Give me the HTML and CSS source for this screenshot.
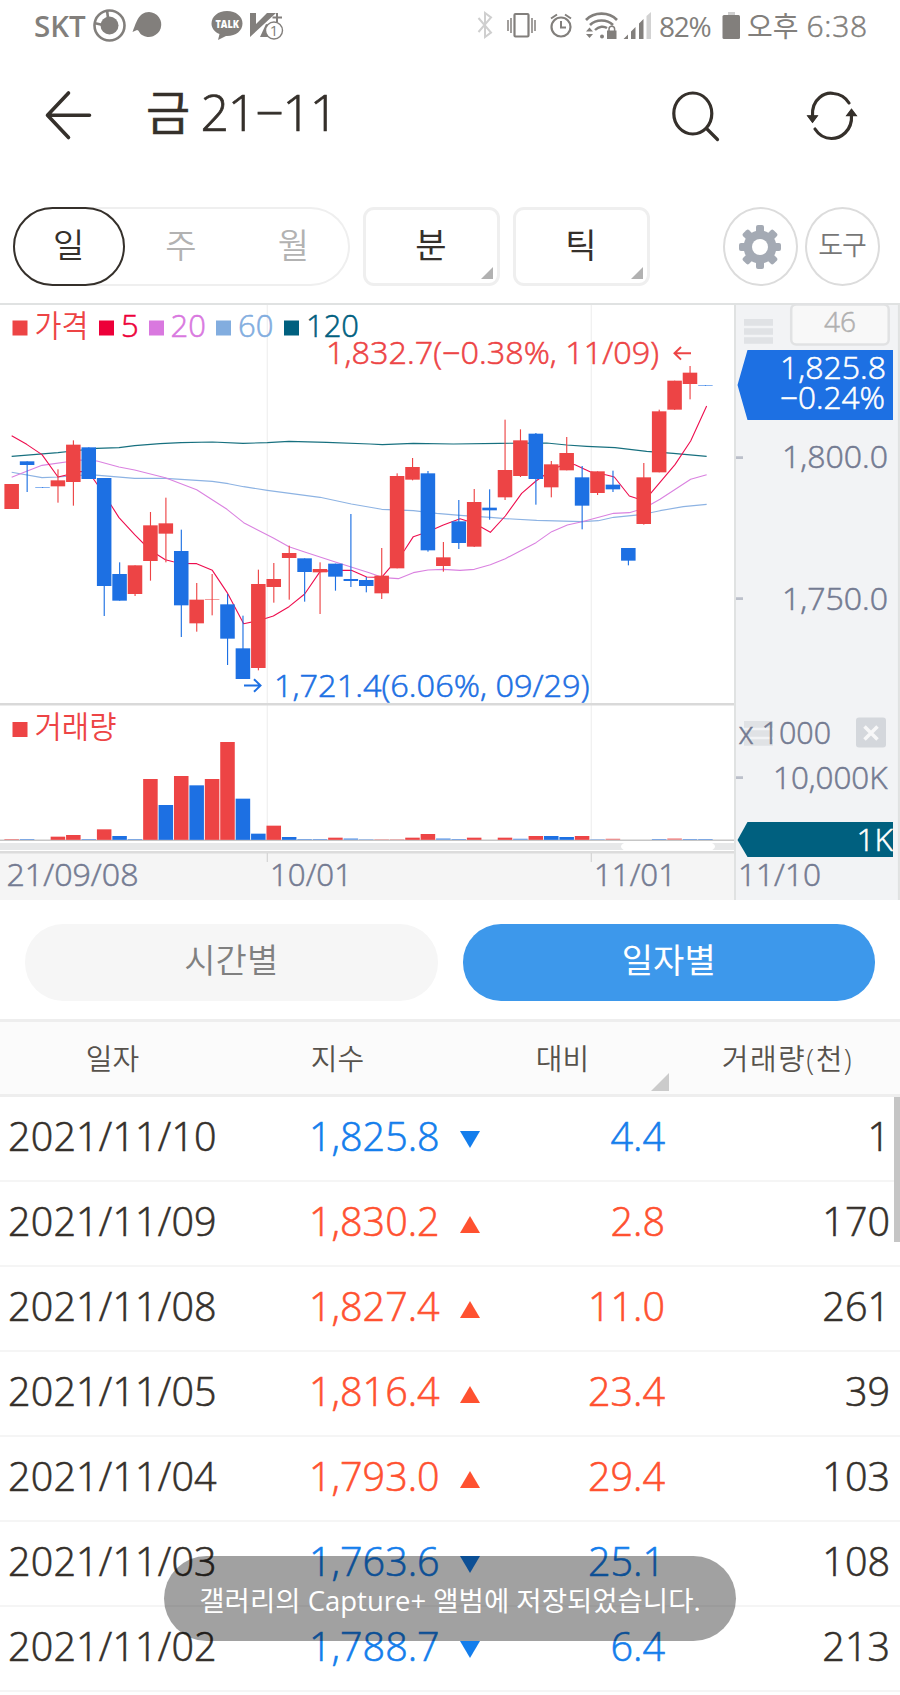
FILE: index.html
```html
<!DOCTYPE html>
<html lang="ko">
<head>
<meta charset="utf-8">
<title>금 21-11</title>
<link rel="stylesheet" href="styles.css">
</head>
<body>
<div class="screen">
  <header class="status">
    <span class="carrier">SKT</span>
    <svg class="status-left" width="200" height="50" viewBox="90 0 200 50">
      <g fill="none" stroke="#827f7c" stroke-width="2.6"><circle cx="109.500" cy="25.500" r="15"/><path d="M94 23l9 2M107 10l1 8"/></g>
      <circle cx="109.500" cy="25.500" r="9" fill="#827f7c"/>
      <path d="M132.500 32C136 24 138 12 149 12a12.500 12.500 0 1 1-7 23c-3-2-3-5-5-5z" fill="#827f7c"/>
      <path d="M227 11c9 0 15.500 5.500 15.500 12.500S236 36 227 36h-1l-8 4 1.500-6c-5-2-8-6-8-10.500C211.500 16.500 218 11 227 11z" fill="#827f7c"/>
      <text class="talk" x="215.500" y="27.500" textLength="23.500" lengthAdjust="spacingAndGlyphs">TALK</text>
      <path d="M250 13h6v11l11-11h9L250 37z" fill="#827f7c"/>
      <path d="M277 13v9M272.500 17.500h9.500" stroke="#827f7c" stroke-width="2"/>
      <path d="M260 37l6-13 6 2v11z" fill="#827f7c"/>
      <circle cx="274" cy="30.500" r="8.500" fill="#fff" stroke="#827f7c" stroke-width="1.400"/>
      <text class="badge-count" x="274" y="36" text-anchor="middle">1</text>
    </svg>
    <svg class="status-right" width="180" height="50" viewBox="475 0 180 50" fill="none" stroke="#827f7c">
      <path d="M478.500 18l12.500 14.500-6 4.500V13l6 4.500L478.500 32" stroke="#cfcfcf" stroke-width="2"/>
      <rect x="514.500" y="14" width="14" height="22.500" rx="1" stroke-width="2.200"/>
      <path d="M508 20v11M511 18v15M532 18v15M535 20v11" stroke-width="1.500"/>
      <circle cx="561" cy="27" r="9.500" stroke-width="2.200"/><path d="M561 21v6.500h5M551 18.500l6-4M571 18.500l-6-4" stroke-width="2"/>
      <path d="M586 20c8-8.500 23-8.500 31 0M590 25c6-6 17-6 23 0" stroke-width="2.600"/><path d="M595 30c4-4 9-4 12-2" stroke-width="2.400"/>
      <g fill="#827f7c" stroke="none"><circle cx="602" cy="36.500" r="2"/><path d="M586 31.500l3.500-4 3.500 4zM586 34h7l-3.500 4zM607 30.500h9.500V39H607z"/></g>
      <path d="M609 31v-2a2.800 2.800 0 0 1 5.600 0v2" stroke-width="1.500"/>
      <g fill="#827f7c" stroke="none"><path d="M623.500 39l4.500-4.500V39zM631 31.500l4.500-4.500v12H631zM639 23.500l4.500-4.500v20H639z"/><path d="M646.500 16l4.500-4v27h-4.500z" fill="#d2d2d2"/></g>
    </svg>
    <span class="battery-text">82%</span>
    <svg class="battery" width="18" height="50" viewBox="722 0 18 50"><path d="M728 12h7v3h-7z" fill="#cfcfcf"/><rect x="722.500" y="15" width="17.500" height="24" rx="1.500" fill="#827f7c"/></svg>
    <span class="clock"><span class="ampm">오후</span><span class="time">6:38</span></span>
  </header>

  <div class="titlebar">
    <svg width="60" height="60" viewBox="40 85 60 60" fill="none" stroke="#35302b" stroke-width="3.600" stroke-linecap="round" stroke-linejoin="round"><path d="M68.500 93L47.500 115.300l21 22.200M48 115.300h41.500"/></svg>
    <h1><span class="name">금</span>21−11</h1>
    <svg class="search" width="60" height="60" viewBox="665 85 60 60" fill="none" stroke="#35302b" stroke-width="3.200" stroke-linecap="round"><ellipse cx="692.800" cy="113.500" rx="19" ry="20.500"/><path d="M706.500 128.500l11 11"/></svg>
    <svg class="refresh" width="60" height="60" viewBox="800 85 60 60" fill="none" stroke="#35302b" stroke-width="3.200" stroke-linecap="round"><path d="M812.500 116c-1-18 13-24 21-22.500 7 .500 12 4 15.500 9.500M851.500 115c1 16-11 23.500-20 23.500-7 0-13-4-16.500-9.500"/><path d="M807 115.500h11l-5.500 7.500zM846 116h11l-5.500-7z" fill="#35302b" stroke="none"/><path d="M808 116h9l-4.500 6zM847 115.500h9l-4.500-6z" stroke-width="1.500" fill="#35302b"/></svg>
  </div>

  <nav class="toolbar">
    <div class="periods"><span class="period active">일</span><span class="period">주</span><span class="period">월</span></div>
    <div class="select">분</div>
    <div class="select">틱</div>
    <div class="round gear">
      <svg width="44" height="46" viewBox="-22 -23 44 46"><g fill="#a4aab4"><circle r="16.500"/><rect x="-4" y="-22" width="8" height="44" rx="2"/><rect x="-21" y="-4" width="42" height="8" rx="2"/><g transform="rotate(45)"><rect x="-4.200" y="-21.500" width="8.400" height="43" rx="2"/><rect x="-21.500" y="-4.200" width="43" height="8.400" rx="2"/></g></g><circle r="8" fill="#fff"/></svg>
    </div>
    <div class="round">도구</div>
  </nav>

  <svg class="chart" width="900" height="597" viewBox="0 303 900 597">
    <rect x="0" y="853" width="735" height="47" fill="#f5f5f5"/>
    <rect x="735" y="303" width="165" height="597" fill="#f2f3f5"/>
    <path d="M0 304h900M898.900 303v597M735 305v595" stroke="#e0e2e2" stroke-width="2"/>
    <path d="M267.300 305v534M591.300 305v534" stroke="#f1f1f1" stroke-width="1.300"/>
    <path d="M0 704.200h734" stroke="#d9d9d9" stroke-width="2.600"/>
    <path d="M0 840.300h734" stroke="#c6c6c6" stroke-width="1.500"/>
    <rect x="0" y="843" width="734" height="7" fill="#e7e8e9"/>
    <rect x="621" y="842.500" width="94" height="8" rx="6" fill="#fff"/>
    <path d="M0 852.300h734" stroke="#dcdcdc" stroke-width="2.400"/>
    <path d="M267.300 853v9M591.300 853v9" stroke="#d4d4d4" stroke-width="1.200"/>

    <g transform="translate(0 340) scale(.33333)" fill="none" stroke-width="3.300" stroke-linejoin="round">
      <polyline stroke="#17707f" points="35,349 174,338 219,333 290,325 357,323 404,317 480,311 543,308 637,306 729,310 802,308 867,304 980,307 1110,312 1147,314 1240,310 1360,312 1500,310 1640,309 1700,315 1760,319 1845,323 1940,334 2020,340 2120,349"/>
      <polyline stroke="#8db3e3" points="35,397 126,413 174,411 270,404 404,415 496,415 637,424 685,431 731,440 802,451 960,472 1054,492 1145,508 1240,512 1310,520 1380,526 1471,532 1516,536 1610,541 1746,545 1795,542 1841,532 1930,523 1980,512 2050,500 2120,493"/>
      <polyline stroke="#da82e0" points="35,412 80,394 126,376 240,360 291,363 357,381 404,390 496,413 590,449 681,508 731,548 820,594 867,620 914,636 1006,666 1110,699 1150,713 1195,716 1240,698 1284,690 1330,688 1380,691 1423,688 1471,674 1516,656 1608,608 1655,575 1702,555 1746,545 1841,520 1888,518 1932,505 1980,478 2072,418 2120,404"/>
      <polyline stroke="#ee0d4e" points="35,287 80,313 126,344 174,411 240,395 265,395 291,432 333,495 357,533 404,584 450,630 496,659 520,665 545,670 590,671 637,691 681,757 731,851 775,842 820,828 867,800 914,762 960,695 1006,691 1054,691 1100,711 1145,712 1168,685 1191,660 1214,630 1240,590 1284,575 1330,555 1380,536 1423,550 1471,577 1516,528 1565,460 1608,423 1655,390 1702,368 1725,374 1770,395 1820,405 1843,411 1888,468 1932,482 1952,460 2025,374 2072,303 2120,198"/>
    </g>
    <g id="candles" transform="translate(0 340) scale(.33333)"></g>
    <g id="volumes" transform="translate(0 690) scale(.33333)"></g>

    <rect x="12.500" y="320.500" width="15" height="15" fill="#ed4445"/>
    <rect x="99" y="320.500" width="15" height="15" fill="#ed0039"/>
    <rect x="149" y="320.500" width="15" height="15" fill="#d978df"/>
    <rect x="216" y="320.500" width="15" height="15" fill="#82addf"/>
    <rect x="284" y="320.500" width="15" height="15" fill="#00607f"/>
    <rect x="12.500" y="722" width="15" height="15" fill="#ed4445"/>
    <g class="label">
      <text class="ko red" x="34.500" y="337" textLength="54" lengthAdjust="spacingAndGlyphs">가격</text>
      <text class="ma5" x="121" y="336.600">5</text>
      <text class="ma20" x="170.500" y="336.600">20</text>
      <text class="ma60" x="238" y="336.600">60</text>
      <text class="teal" x="306" y="336.600" textLength="53" lengthAdjust="spacingAndGlyphs">120</text>
      <text class="ko red" x="34.500" y="738" textLength="82" lengthAdjust="spacingAndGlyphs">거래량</text>
      <text class="red" x="326" y="364.300" textLength="333" lengthAdjust="spacingAndGlyphs">1,832.7(−0.38%, 11/09)</text>
      <text class="blue" x="274" y="696.600" textLength="315.500" lengthAdjust="spacingAndGlyphs">1,721.4(6.06%, 09/29)</text>
    </g>
    <path d="M691 353.300h-16M681 347l-6.500 6.300 6.500 6.300" fill="none" stroke="#ed4445" stroke-width="2"/>
    <path d="M244 685.500h16M254 679.200l6.500 6.300-6.500 6.300" fill="none" stroke="#1d70e3" stroke-width="2"/>

    <path d="M744 322.300h29M744 331.500h29M744 340.500h29M744 724.300h29M744 733.500h29M744 742.500h29" stroke="#e0e2e5" stroke-width="6.700"/>
    <rect x="791.200" y="304.500" width="97.500" height="40" rx="5" fill="#f8f8f8" stroke="#e1e2e3" stroke-width="2.500"/>
    <text class="count" x="840" y="332" text-anchor="middle">46</text>
    <path d="M737.500 385L747.500 350H893v70H747.500z" fill="#1d70e3"/>
    <path d="M737.500 840L747.500 822H893v35H747.500z" fill="#00607f"/>
    <path d="M736 457.600h7M736 598.600h7M736 777.600h7" stroke="#bcc0ca" stroke-width="2.600"/>
    <rect x="856" y="717.500" width="30" height="30" rx="3" fill="#d4d7dc"/>
    <path d="M864.500 726.500l13 13M877.500 726.500l-13 13" stroke="#f7f7f8" stroke-width="3.500"/>
    <g class="label axis">
      <text class="white" x="780" y="378.800" textLength="106" lengthAdjust="spacingAndGlyphs">1,825.8</text>
      <text class="white" x="780" y="408.500" textLength="105" lengthAdjust="spacingAndGlyphs">−0.24%</text>
      <text x="782" y="468.300" textLength="106" lengthAdjust="spacingAndGlyphs">1,800.0</text>
      <text x="782" y="609.600" textLength="106" lengthAdjust="spacingAndGlyphs">1,750.0</text>
      <text x="738.500" y="743.500" textLength="92.500" lengthAdjust="spacingAndGlyphs">x 1000</text>
      <text x="773" y="788.600" textLength="114.500" lengthAdjust="spacingAndGlyphs">10,000K</text>
      <text class="white" x="856.500" y="851" textLength="36.500" lengthAdjust="spacingAndGlyphs">1K</text>
      <text x="738" y="885.600" textLength="83" lengthAdjust="spacingAndGlyphs">11/10</text>
      <text x="6.500" y="885.600" textLength="132" lengthAdjust="spacingAndGlyphs">21/09/08</text>
      <text x="270" y="885.600" textLength="82" lengthAdjust="spacingAndGlyphs">10/01</text>
      <text x="594" y="885.600" textLength="82" lengthAdjust="spacingAndGlyphs">11/01</text>
    </g>
  </svg>

  <div class="tabs"><div class="tab">시간별</div><div class="tab selected">일자별</div></div>

  <div class="grid head"><span>일자</span><span>지수</span><span class="sortable">대비</span><span class="wide">거래량(천)</span></div>
  <div class="rows">
    <div class="grid row down"><span class="date">2021/11/10</span><span class="price">1,825.8<i></i></span><span class="diff">4.4</span><span class="vol">1</span></div>
    <div class="grid row up"><span class="date">2021/11/09</span><span class="price">1,830.2<i></i></span><span class="diff">2.8</span><span class="vol">170</span></div>
    <div class="grid row up"><span class="date">2021/11/08</span><span class="price">1,827.4<i></i></span><span class="diff">11.0</span><span class="vol">261</span></div>
    <div class="grid row up"><span class="date">2021/11/05</span><span class="price">1,816.4<i></i></span><span class="diff">23.4</span><span class="vol">39</span></div>
    <div class="grid row up"><span class="date">2021/11/04</span><span class="price">1,793.0<i></i></span><span class="diff">29.4</span><span class="vol">103</span></div>
    <div class="grid row down"><span class="date">2021/11/03</span><span class="price">1,763.6<i></i></span><span class="diff">25.1</span><span class="vol">108</span></div>
    <div class="grid row down"><span class="date">2021/11/02</span><span class="price">1,788.7<i></i></span><span class="diff">6.4</span><span class="vol">213</span></div>
    <div class="scrollbar"></div>
  </div>
  <div class="toast">갤러리의 Capture+ 앨범에 저장되었습니다.</div>
</div>
<script src="chart.js"></script>
</body>
</html>
```
FILE: styles.css
```css
* { box-sizing: border-box; }
body { margin: 0; background: #fff; }
.screen {
  position: relative;
  width: 900px;
  height: 1695px;
  overflow: hidden;
  background: #fff;
  color: #35302b;
  font-family: "Open Sans", "Noto Sans CJK KR", sans-serif;
  font-weight: 360;
}
svg { display: block; flex: none; }

.status { display: flex; height: 50px; padding-left: 34px; color: #827f7c; font-size: 28px; line-height: 52px; white-space: nowrap; }
.carrier { width: 56px; font-weight: 600; font-size: 29.5px; }
.status-right { margin-left: 185px; }
.talk { font-size: 11px; font-weight: 800; fill: #fff; }
.badge-count { font-size: 15px; font-weight: 400; fill: #827f7c; }
.battery-text { width: 63px; margin-left: 4px; letter-spacing: -1.3px; font-weight: 400; }
.clock { display: flex; gap: 8px; margin-left: 7px; font-weight: 380; }
.time { font-size: 30px; letter-spacing: .7px; font-weight: 360; -webkit-text-stroke: .5px; }

.titlebar { display: flex; height: 157px; padding: 35px 0 0 40px; }
h1 { display: flex; margin: 0 0 0 46px; width: 479px; font-size: 50px; font-weight: 360; line-height: 54px; letter-spacing: -1.2px; -webkit-text-stroke: .7px; }
.name { width: 54.500px; font-size: 48px; }
.search { margin-left: 40px; }
.refresh { margin-left: 75px; }

.toolbar { display: flex; height: 96px; padding-left: 12.500px; font-size: 34px; }
.periods { display: flex; width: 337px; height: 79px; border-radius: 40px; box-shadow: inset 0 0 0 2px #efefef; color: #b2b2b2; }
.period { display: flex; width: 112.500px; align-items: center; justify-content: center; padding-bottom: 6px; }
.period.active { border: 2px solid #35302b; border-radius: 40px; color: #35302b; }
.select { position: relative; display: flex; width: 137px; height: 79px; margin-left: 13px; padding-bottom: 6px; align-items: center; justify-content: center; border: 3px solid #efefef; border-radius: 11px; font-weight: 400; }
.select::after { content: ""; position: absolute; right: 4px; bottom: 4px; border: 6.500px solid #b1b1b1; border-top-color: transparent; border-left-color: transparent; }
.round { display: flex; width: 75px; height: 79px; margin-left: 7px; padding-bottom: 6px; align-items: center; justify-content: center; border: 2px solid #dcdcdc; border-radius: 50%; color: #777; font-size: 27px; letter-spacing: -1px; }
.gear { margin-left: 73px; padding: 0; border-width: 2.500px; }

.label { font-size: 31px; }
.label text { stroke-width: .55px; }
.label .ko { stroke-width: 0; }
.axis text { fill: #747b92; stroke: #747b92; }
.label .white { fill: #fff; stroke: #fff; }
.red { fill: #ed4445; stroke: #ed4445; }
.blue { fill: #1d70e3; stroke: #1d70e3; }
.ma5 { fill: #ed0039; stroke: #ed0039; }
.ma20 { fill: #d978df; stroke: #d978df; }
.ma60 { fill: #82addf; stroke: #82addf; }
.teal { fill: #00607f; stroke: #00607f; }
.count { font-size: 28px; fill: #b0b0b0; stroke: #b0b0b0; stroke-width: .5px; }

.tabs { display: flex; gap: 25px; height: 119px; padding: 24px 25px 0; }
.tab { flex: 1; height: 77px; border-radius: 38px; background: #f6f6f6; color: #808080; font-size: 34px; line-height: 72px; text-align: center; }
.selected { background: #3d98eb; color: #fff; font-weight: 400; }

.grid { display: grid; grid-template-columns: 225px 225px 225px 225px; }
.head { height: 78px; border-top: 3px solid #eee; border-bottom: 3px solid #eee; background: #fbfbfb; color: #57524c; font-size: 29px; line-height: 73px; text-align: center; }
.wide { letter-spacing: 1.5px; }
.sortable { position: relative; }
.sortable::after { content: ""; position: absolute; right: 6px; bottom: 4px; border: 9.500px solid #cbcbcb; border-top-color: transparent; border-left-color: transparent; }
.rows { position: relative; }
.row { height: 85px; padding: 0 10px 0 8px; grid-template-columns: 301px 209px 147px 1fr; border-bottom: 2.500px solid #f5f5f5; font-size: 39.500px; line-height: 78px; white-space: nowrap; -webkit-text-stroke: .6px; }
.date { letter-spacing: .15px; }
.diff, .vol { text-align: right; }
.price i { display: inline-block; margin-left: 20px; border: 10.500px solid transparent; border-top: 0; border-bottom: 17px solid #ff5130; vertical-align: 3px; }
.up .price, .up .diff { color: #ff5130; }
.down .price, .down .diff { color: #147eec; }
.down .price i { border-top: 17px solid #147eec; border-bottom: 0; }
.scrollbar { position: absolute; top: 0; right: 0; width: 6px; height: 145px; background: #c5c5c5; }
.toast { position: absolute; left: 164px; top: 1556px; width: 572px; height: 85px; border-radius: 43px; background: rgba(0, 0, 0, .37); color: #fff; font-size: 27.500px; line-height: 89px; text-align: center; white-space: nowrap; font-weight: 400; }
```
FILE: chart.js
```js
// Each candle: direction, high, body top, body bottom, low (plot units, 3 per pixel).
const candles = [
  ['r',432,432,507,507],['b',364,364,375,456],['b',441,441,443,443],['r',388,421,439,488],['r',301,314,426,497],
  ['b',322,322,417,417],['b',414,414,738,828],['b',667,702,782,782],['r',676,676,762,768],['r',516,556,663,722],
  ['r',473,550,581,667],['b',569,633,796,891],['r',729,779,850,875],['r',702,777,779,826],['b',762,793,896,975],
  ['b',827,925,1017,1017],['r',689,732,984,991],['r',669,717,741,788],['r',617,639,654,779],['b',655,655,696,785],
  ['r',667,687,697,822],['b',671,671,710,752],['b',522,717,723,741],['b',711,720,738,757],['r',624,707,760,777],
  ['r',400,408,685,685],['r',354,381,419,421],['b',393,400,631,635],['r',606,652,678,695],['b',480,544,609,627],
  ['r',447,486,620,621],['b',448,503,511,539],['r',239,390,472,480],['r',268,301,408,411],['b',279,281,417,494],
  ['r',363,373,442,472],['r',291,339,391,391],['b',378,412,497,568],['r',394,394,459,465],['b',392,434,448,456],
  ['b',624,624,662,676],['r',369,412,552,554],['r',209,214,397,397],['r',122,122,209,210],['r',78,98,132,178],['b',135,135,137,137]
];
// Bar tops, with direction; the baseline is 449.
const volumes = 'r447 b447 - r440 r435 b447 r418 b438 b447 r267 b345 r258 b286 r267 r156 b326 b431 r407 b441 b447 b447 r443 b445 b448 r448 r448 r443 r432 b445 b447 r443 - r443 b446 r438 b438 b441 r438 b448 r446 - - b447 r445 b447 b447'.split(' ');
const color = { r: '#ed4445', b: '#1d70e3' };
const center = i => 35 + 46.25 * i;
const rect = (x, y, w, h, c, o = 1) => `<rect x="${x}" y="${y}" width="${w}" height="${h}" fill="${c}" opacity="${o}"/>`;

document.getElementById('candles').innerHTML = candles.map(([d, hi, top, bottom, lo], i) => {
  const x = center(i);
  return rect(x - 1.5, hi, 3.4, lo - hi, color[d]) + rect(x - 21.8, top, 43.6, bottom - top, color[d], bottom - top < 3 ? .8 : 1);
}).join('');

document.getElementById('volumes').innerHTML = volumes.map((v, i) => {
  if (v === '-') return '';
  const top = Number(v.slice(1));
  return rect(center(i) - 21.8, top, 43.6, 449.5 - top, color[v[0]], top > 444 ? .6 : 1);
}).join('');
```
